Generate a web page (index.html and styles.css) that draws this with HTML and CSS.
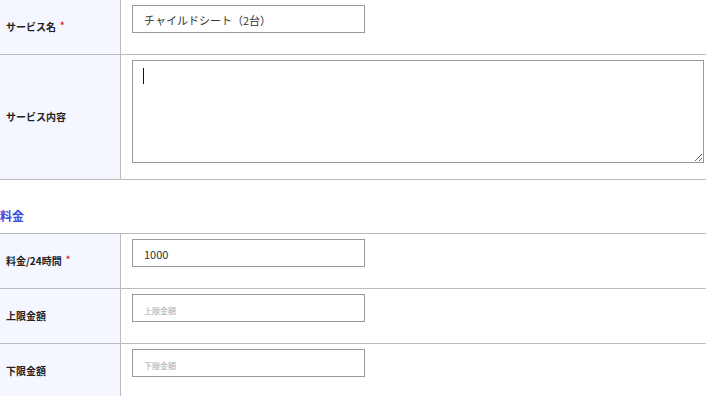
FILE: index.html
```html
<!DOCTYPE html>
<html lang="ja">

<head>
  <meta charset="utf-8">
  <title>オプション編集</title>
  <link rel="stylesheet" href="styles.css">
</head>

<body>
  <div class="form-table first">
    <div class="form-row">
      <div class="form-label">サービス名<span class="req">*</span></div>
      <div class="form-field">
        <input class="text-input" type="text" value="チャイルドシート（2台）">
      </div>
    </div>
    <div class="form-row">
      <div class="form-label">サービス内容</div>
      <div class="form-field">
        <div class="area-wrap">
          <textarea class="text-area"></textarea>
        </div>
      </div>
    </div>
  </div>

  <h3 class="section-title">料金</h3>

  <div class="form-table">
    <div class="form-row">
      <div class="form-label">料金/24時間<span class="req">*</span></div>
      <div class="form-field">
        <input class="text-input" type="text" value="1000">
      </div>
    </div>
    <div class="form-row">
      <div class="form-label">上限金額</div>
      <div class="form-field">
        <input class="text-input" type="text" placeholder="上限金額">
      </div>
    </div>
    <div class="form-row">
      <div class="form-label">下限金額</div>
      <div class="form-field">
        <input class="text-input" type="text" placeholder="下限金額">
      </div>
    </div>
  </div>
</body>

</html>
```

FILE: styles.css
```css
body,
html {
  margin: 0;
  padding: 0;
  background: #fff;
  font-family: "Noto Sans CJK JP", "Noto Sans", sans-serif;
  color: #222;
}

.form-table {
  width: 720px;
  border-top: 1px solid #bcbcbc;
}

.form-table.first {
  border-top: none;
}

.form-row {
  display: grid;
  grid-template-columns: 121px 1fr;
  border-bottom: 1px solid #bcbcbc;
}

.form-label {
  display: flex;
  align-items: center;
  padding: 0 0 2px 6px;
  background: #f4f7ff;
  border-right: 1px solid #bcbcbc;
  font-size: 10px;
  font-weight: bold;
  color: #222;
}

.req {
  color: #e8102a;
  font-size: 9px;
  margin-left: 4px;
  position: relative;
  top: -1px;
}

.form-field {
  padding: 5px 11px 16px 11px;
}

.text-input {
  display: block;
  box-sizing: border-box;
  width: 233px;
  height: 28px;
  margin: 0 0 5px;
  padding: 1px 11px 0;
  border: 1px solid #9a9a9a;
  border-radius: 0;
  font-family: "Noto Sans CJK JP", "Noto Sans", sans-serif;
  font-size: 11px;
  color: #333;
  outline: none;
}

.text-input::placeholder {
  color: #a8a8a8;
  font-size: 8px;
}

.area-wrap {
  position: relative;
  width: 572px;
}

/* text cursor shown in the empty textarea */
.area-wrap::after {
  content: "";
  position: absolute;
  left: 11px;
  top: 8px;
  width: 1px;
  height: 16px;
  background: #111;
}

.text-area {
  display: block;
  box-sizing: border-box;
  width: 572px;
  height: 103px;
  margin: 0;
  padding: 7px 10px;
  border: 1px solid #9a9a9a;
  border-radius: 0;
  font-family: "Noto Sans CJK JP", "Noto Sans", sans-serif;
  font-size: 12px;
  color: #222;
  outline: none;
}

.section-title {
  margin: 27px 0 8px;
  font-size: 12px;
  line-height: 18px;
  font-weight: bold;
  color: #3d4fe0;
}
```
